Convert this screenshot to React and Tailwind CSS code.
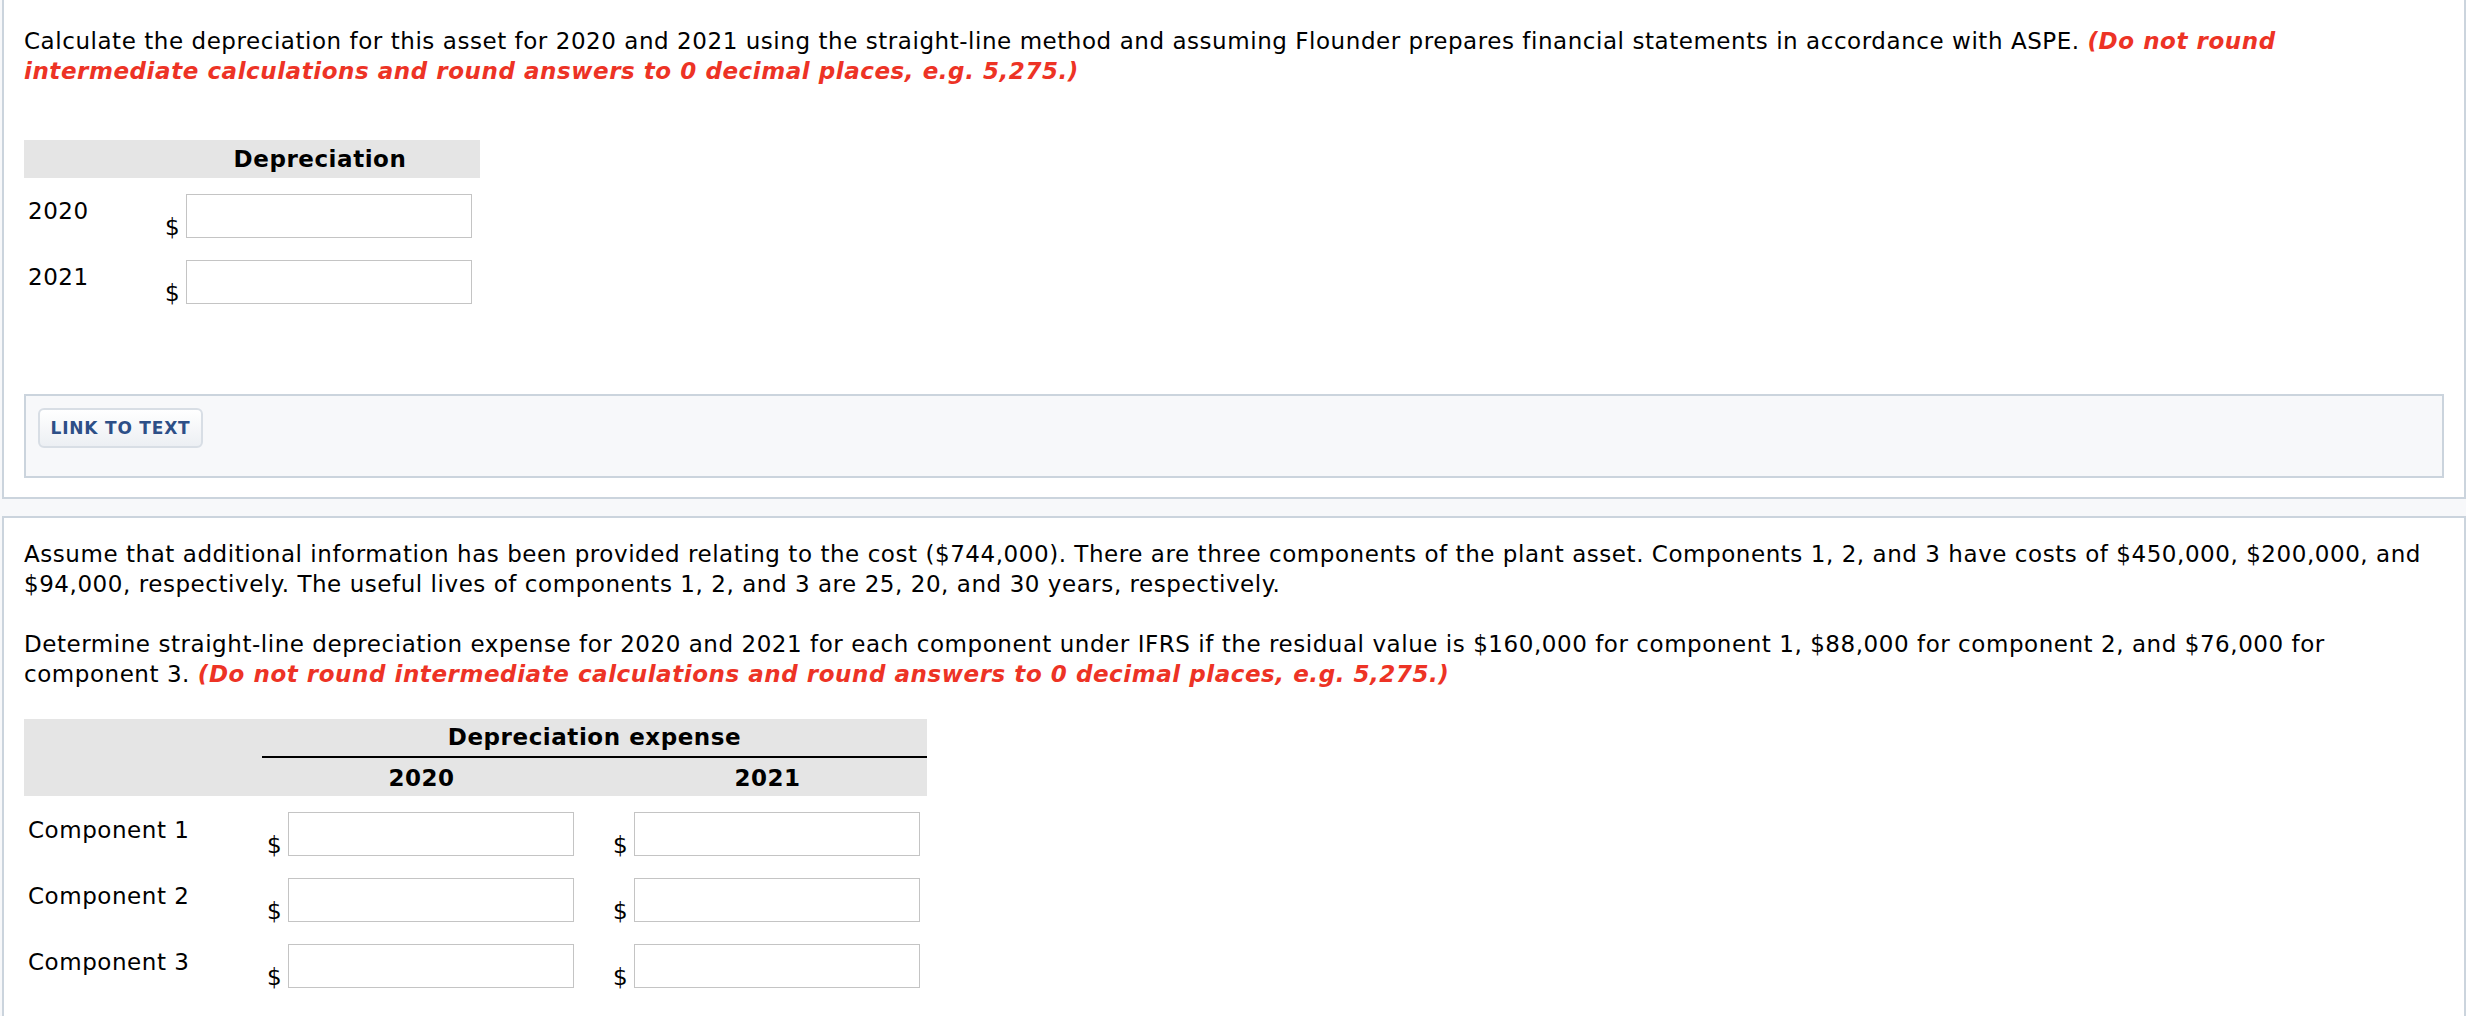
import React from "react";

const RED = "text-[#ed3325]";

function Money({ w = "w-[319px]" }) {
  return (
    <div className={`${w} flex items-start shrink-0`}>
      <span className="ml-[5px] mt-[18px] w-[20px] leading-[30px]">$</span>
      <div className="ml-[1px] h-[44px] w-[286px] border border-[#c4c4c4] bg-white" />
    </div>
  );
}

function Row1({ label }) {
  return (
    <div className="flex h-[66px] items-start">
      <div className="w-[136px] shrink-0 pl-[4px] pt-[2px] leading-[30px]">{label}</div>
      <Money w="w-[320px]" />
    </div>
  );
}

function Row2({ label }) {
  return (
    <div className="flex h-[66px] items-start">
      <div className="w-[238px] shrink-0 pl-[4px] pt-[3px] leading-[30px]">{label}</div>
      <Money w="w-[319px]" />
      <div className="w-[27px] shrink-0" />
      <Money w="w-[319px]" />
    </div>
  );
}

export default function App() {
  return (
    <div
      className="min-h-screen bg-[#f7f8fa] text-[23px] leading-[30px] tracking-[0.55px] text-black"
      style={{ fontFamily: '"DejaVu Sans", Verdana, sans-serif' }}
    >
      {/* Panel 1 */}
      <div className="ml-[2px] w-[2464px] border-x-2 border-b-2 border-[#cbd4dd] bg-white px-[20px] pt-[26px] pb-[19px]">
        <p>
          Calculate the depreciation for this asset for 2020 and 2021 using the straight-line method and
          assuming Flounder prepares financial statements in accordance with ASPE.{" "}
          <span className={`${RED} font-bold italic`}>
            (Do not round intermediate calculations and round answers to 0 decimal places, e.g. 5,275.)
          </span>
        </p>

        <div className="mt-[54px]">
          <div className="flex h-[38px] w-[456px] bg-[#e5e5e5]">
            <div className="w-[136px]" />
            <div className="w-[320px] pt-[4px] text-center font-bold">Depreciation</div>
          </div>
          <div className="mt-[16px]">
            <Row1 label="2020" />
            <Row1 label="2021" />
          </div>
        </div>

        <div className="mt-[68px] h-[84px] border-2 border-[#cbd4dd] bg-[#f7f8fa] px-[12px] pt-[12px]">
          <button className="flex h-[40px] w-[165px] items-center justify-center rounded-[6px] border-2 border-[#d8dee5] bg-gradient-to-b from-[#ffffff] to-[#eceff3] text-[17px] font-bold tracking-[0.8px] text-[#2d4f87]">
            LINK TO TEXT
          </button>
        </div>
      </div>

      {/* Panel 2 */}
      <div className="mt-[17px] ml-[2px] w-[2464px] border-2 border-[#cbd4dd] bg-white px-[20px] pt-[21px] pb-[40px]">
        <p>
          Assume that additional information has been provided relating to the cost ($744,000). There are
          three components of the plant asset. Components 1, 2, and 3 have costs of $450,000, $200,000, and
          $94,000, respectively. The useful lives of components 1, 2, and 3 are 25, 20, and 30 years,
          respectively.
        </p>
        <p className="mt-[30px]">
          Determine straight-line depreciation expense for 2020 and 2021 for each component under IFRS if the
          residual value is $160,000 for component 1, $88,000 for component 2, and $76,000 for component 3.{" "}
          <span className={`${RED} font-bold italic`}>
            (Do not round intermediate calculations and round answers to 0 decimal places, e.g. 5,275.)
          </span>
        </p>

        <div className="mt-[30px]">
          <div className="flex h-[77px] w-[903px] bg-[#e5e5e5]">
            <div className="w-[238px] shrink-0" />
            <div className="w-[665px] shrink-0">
              <div className="border-b-2 border-black pt-[3px] pb-[4px] text-center font-bold">
                Depreciation expense
              </div>
              <div className="flex pt-[5px] font-bold">
                <div className="w-[319px] text-center">2020</div>
                <div className="w-[27px]" />
                <div className="w-[319px] text-center">2021</div>
              </div>
            </div>
          </div>
          <div className="mt-[16px]">
            <Row2 label="Component 1" />
            <Row2 label="Component 2" />
            <Row2 label="Component 3" />
          </div>
        </div>
      </div>
    </div>
  );
}
